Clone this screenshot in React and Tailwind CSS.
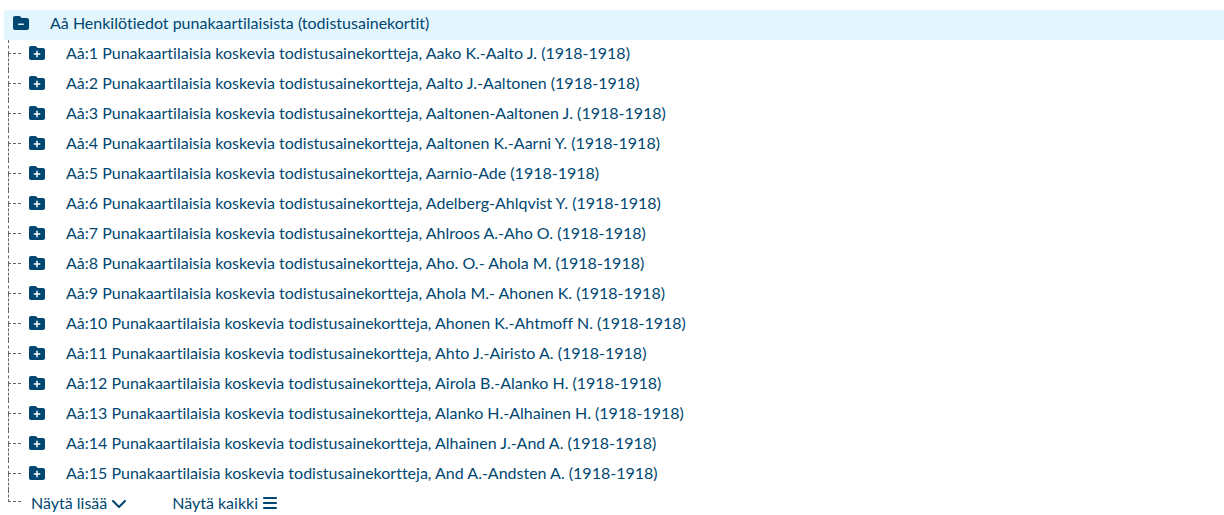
import React, { useState } from "react";
import { FaBars, FaChevronDown, FaFolderMinus, FaFolderPlus } from "react-icons/fa6";

const names = [
  "Aako K.-Aalto J.",
  "Aalto J.-Aaltonen",
  "Aaltonen-Aaltonen J.",
  "Aaltonen K.-Aarni Y.",
  "Aarnio-Ade",
  "Adelberg-Ahlqvist Y.",
  "Ahlroos A.-Aho O.",
  "Aho. O.- Ahola M.",
  "Ahola M.- Ahonen K.",
  "Ahonen K.-Ahtmoff N.",
  "Ahto J.-Airisto A.",
  "Airola B.-Alanko H.",
  "Alanko H.-Alhainen H.",
  "Alhainen J.-And A.",
  "And A.-Andsten A.",
];

const Branch = ({ last }) => (
  <div className="flex w-[13px] shrink-0 flex-col self-stretch" aria-hidden="true">
    <div className={`border-b border-l border-dashed border-[#666] ${last ? "h-3" : "h-3.5"}`} />
    {!last && <div className="flex-1 border-l border-dashed border-[#666]" />}
  </div>
);

const TreeItem = ({ number, name }) => (
  <li className="flex">
    <Branch />
    <div className="flex min-h-[30px] items-center pb-1 pl-2">
      <button type="button" className="shrink-0 cursor-pointer" aria-label={`Avaa Aå:${number}`}>
        <FaFolderPlus className="size-4" />
      </button>
      <a href={`#aa-${number}`} className="ml-[21px] hover:underline">
        Aå:{number} Punakaartilaisia koskevia todistusainekortteja, {name} (1918-1918)
      </a>
    </div>
  </li>
);

const App = () => {
  const [open, setOpen] = useState(true);

  return (
    <main className="pt-2.5 pl-1 font-['Lato',sans-serif] text-base text-[#004771] [font-variant-ligatures:none]">
      <div className="flex min-h-[30px] items-center bg-[#e3f5fd] pb-1 pl-[9px]">
        <button
          type="button"
          className="shrink-0 cursor-pointer"
          aria-expanded={open}
          aria-label="Avaa tai sulje Aå"
          onClick={() => setOpen(!open)}
        >
          {open ? <FaFolderMinus className="size-4" /> : <FaFolderPlus className="size-4" />}
        </button>
        <a href="#aa" className="ml-[21px] hover:underline">Aå Henkilötiedot punakaartilaisista (todistusainekortit)</a>
      </div>

      {open && (
        <ul className="pl-1">
          {names.map((name, i) => (
            <TreeItem key={name} number={i + 1} name={name} />
          ))}
          <li className="flex min-h-[26px] items-center">
            <Branch last />
            <button type="button" className="ml-2.5 flex cursor-pointer items-center gap-1">
              Näytä lisää <FaChevronDown className="size-4" />
            </button>
            <button type="button" className="ml-[45px] flex cursor-pointer items-center gap-1">
              Näytä kaikki <FaBars className="size-4" />
            </button>
          </li>
        </ul>
      )}
    </main>
  );
};

export default App;
